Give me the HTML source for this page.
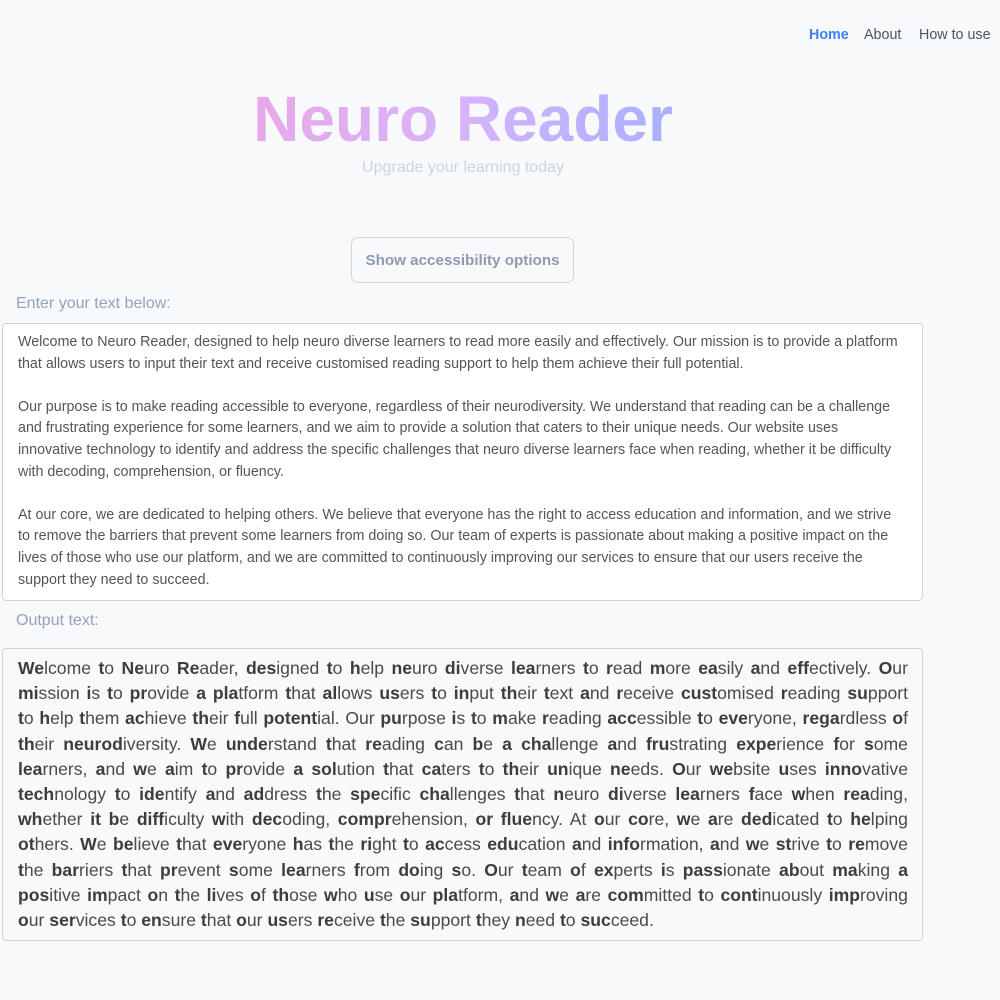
<!DOCTYPE html>
<html><head><meta charset="utf-8"><style>
*{box-sizing:border-box;margin:0;padding:0}
body{width:1000px;height:1000px;background:#f8f9fb;font-family:"Liberation Sans","DejaVu Sans",sans-serif;position:relative;overflow:hidden}
.nav{position:absolute;top:27px;font-size:14.3px;color:#4b5563}
.title{position:absolute;left:0;width:926px;top:79px;text-align:center;font-size:64px;font-weight:bold;line-height:80px}
.title span{background:linear-gradient(90deg,#e8a9e8,#d6b3fa 50%,#a9b0ff);-webkit-background-clip:text;background-clip:text;color:transparent}
.sub{position:absolute;left:0;width:926px;top:159px;text-align:center;font-size:16px;color:#cbd5e1}
.btn{position:absolute;left:351px;top:237px;width:223px;height:46px;border:1px solid #d1d5db;border-radius:7px;font-size:15.2px;font-weight:bold;color:#8f9aae;text-align:center;line-height:46px;background:#f8f9fb}
.lab{position:absolute;left:16px;font-size:16px;color:#94a3b8}
.ta{position:absolute;left:2px;top:323px;width:921px;height:278px;border:1px solid #cfd3da;border-radius:4px;background:#fff;padding:8px 0 0 15px;font-size:14.3px;line-height:21.6px;color:#555}
.ta div{white-space:nowrap;height:21.6px}
.out{position:absolute;left:2px;top:648px;width:921px;height:293px;border:1px solid #cfd3da;border-radius:4px;background:#f8f9fb;padding:7px 14px 0 15px;font-size:17.6px;line-height:25.2px;color:#4a4a4a}
.out div{text-align:justify;text-align-last:justify;white-space:nowrap;height:25.2px}
.out div.l{text-align-last:left}
.out b{color:#3d3d3d}
</style></head><body>
<div class="nav" style="left:809px;color:#3b82f6;font-weight:bold">Home</div>
<div class="nav" style="left:864px">About</div>
<div class="nav" style="left:919px">How to use</div>
<div class="title"><span>Neuro Reader</span></div>
<div class="sub">Upgrade your learning today</div>
<div class="btn">Show accessibility options</div>
<div class="lab" style="top:295px">Enter your text below:</div>
<div class="ta">
<div>Welcome to Neuro Reader, designed to help neuro diverse learners to read more easily and effectively. Our mission is to provide a platform</div>
<div>that allows users to input their text and receive customised reading support to help them achieve their full potential.</div>
<div></div>
<div>Our purpose is to make reading accessible to everyone, regardless of their neurodiversity. We understand that reading can be a challenge</div>
<div>and frustrating experience for some learners, and we aim to provide a solution that caters to their unique needs. Our website uses</div>
<div>innovative technology to identify and address the specific challenges that neuro diverse learners face when reading, whether it be difficulty</div>
<div>with decoding, comprehension, or fluency.</div>
<div></div>
<div>At our core, we are dedicated to helping others. We believe that everyone has the right to access education and information, and we strive</div>
<div>to remove the barriers that prevent some learners from doing so. Our team of experts is passionate about making a positive impact on the</div>
<div>lives of those who use our platform, and we are committed to continuously improving our services to ensure that our users receive the</div>
<div>support they need to succeed.</div>
</div>
<div class="lab" style="top:612px">Output text:</div>
<div class="out">
<div><b>We</b>lcome <b>t</b>o <b>Ne</b>uro <b>Re</b>ader, <b>des</b>igned <b>t</b>o <b>h</b>elp <b>ne</b>uro <b>di</b>verse <b>lea</b>rners <b>t</b>o <b>r</b>ead <b>m</b>ore <b>ea</b>sily <b>a</b>nd <b>eff</b>ectively. <b>O</b>ur</div>
<div><b>mi</b>ssion <b>i</b>s <b>t</b>o <b>pr</b>ovide <b>a</b> <b>pla</b>tform <b>t</b>hat <b>al</b>lows <b>us</b>ers <b>t</b>o <b>in</b>put <b>th</b>eir <b>t</b>ext <b>a</b>nd <b>r</b>eceive <b>cust</b>omised <b>r</b>eading <b>su</b>pport</div>
<div><b>t</b>o <b>h</b>elp <b>t</b>hem <b>ac</b>hieve <b>th</b>eir <b>f</b>ull <b>potent</b>ial. Our <b>pu</b>rpose <b>i</b>s <b>t</b>o <b>m</b>ake <b>r</b>eading <b>acc</b>essible <b>t</b>o <b>eve</b>ryone, <b>rega</b>rdless <b>o</b>f</div>
<div><b>th</b>eir <b>neurod</b>iversity. <b>W</b>e <b>unde</b>rstand <b>t</b>hat <b>re</b>ading <b>c</b>an <b>b</b>e <b>a</b> <b>cha</b>llenge <b>a</b>nd <b>fru</b>strating <b>expe</b>rience <b>f</b>or <b>s</b>ome</div>
<div><b>lea</b>rners, <b>a</b>nd <b>w</b>e <b>a</b>im <b>t</b>o <b>pr</b>ovide <b>a</b> <b>sol</b>ution <b>t</b>hat <b>ca</b>ters <b>t</b>o <b>th</b>eir <b>un</b>ique <b>ne</b>eds. <b>O</b>ur <b>we</b>bsite <b>u</b>ses <b>inno</b>vative</div>
<div><b>tech</b>nology <b>t</b>o <b>ide</b>ntify <b>a</b>nd <b>ad</b>dress <b>t</b>he <b>spe</b>cific <b>cha</b>llenges <b>t</b>hat <b>n</b>euro <b>di</b>verse <b>lea</b>rners <b>f</b>ace <b>w</b>hen <b>rea</b>ding,</div>
<div><b>wh</b>ether <b>it</b> <b>b</b>e <b>diff</b>iculty <b>w</b>ith <b>dec</b>oding, <b>compr</b>ehension, <b>or</b> <b>flue</b>ncy. At <b>o</b>ur <b>co</b>re, <b>w</b>e <b>a</b>re <b>ded</b>icated <b>t</b>o <b>he</b>lping</div>
<div><b>ot</b>hers. <b>W</b>e <b>be</b>lieve <b>t</b>hat <b>eve</b>ryone <b>h</b>as <b>t</b>he <b>ri</b>ght <b>t</b>o <b>ac</b>cess <b>edu</b>cation <b>a</b>nd <b>info</b>rmation, <b>a</b>nd <b>w</b>e <b>st</b>rive <b>t</b>o <b>re</b>move</div>
<div><b>t</b>he <b>bar</b>riers <b>t</b>hat <b>pr</b>event <b>s</b>ome <b>lea</b>rners <b>f</b>rom <b>do</b>ing <b>s</b>o. <b>O</b>ur <b>t</b>eam <b>o</b>f <b>ex</b>perts <b>i</b>s <b>pass</b>ionate <b>ab</b>out <b>ma</b>king <b>a</b></div>
<div><b>pos</b>itive <b>im</b>pact <b>o</b>n <b>t</b>he <b>li</b>ves <b>o</b>f <b>th</b>ose <b>w</b>ho <b>u</b>se <b>o</b>ur <b>pla</b>tform, <b>a</b>nd <b>w</b>e <b>a</b>re <b>com</b>mitted <b>t</b>o <b>cont</b>inuously <b>imp</b>roving</div>
<div class="l"><b>o</b>ur <b>ser</b>vices <b>t</b>o <b>en</b>sure <b>t</b>hat <b>o</b>ur <b>us</b>ers <b>re</b>ceive <b>t</b>he <b>su</b>pport <b>t</b>hey <b>n</b>eed <b>t</b>o <b>suc</b>ceed.</div>
</div>
</body></html>
